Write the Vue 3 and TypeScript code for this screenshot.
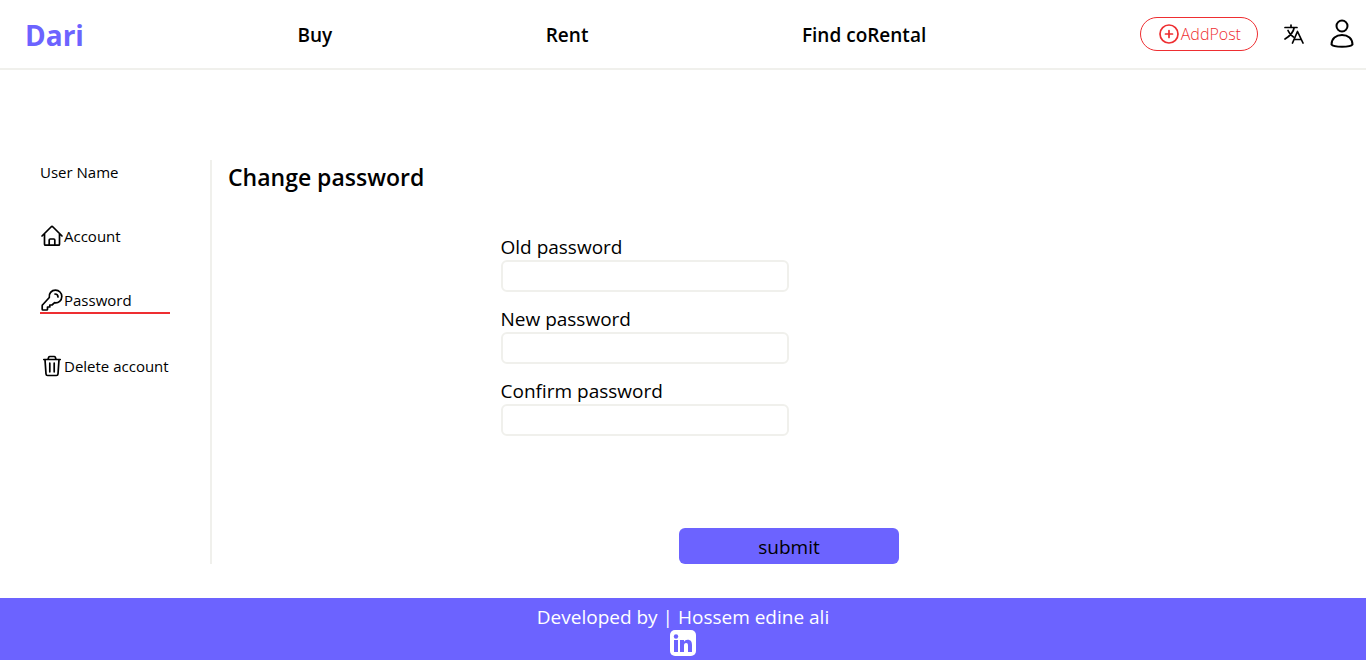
<script setup lang="ts">
import { ref } from 'vue'

interface Field {
  id: string
  label: string
}

const navLinks: string[] = ['Buy', 'Rent', 'Find coRental']

const fields: Field[] = [
  { id: 'old-password', label: 'Old password' },
  { id: 'new-password', label: 'New password' },
  { id: 'confirm-password', label: 'Confirm password' },
]

const values = ref<Record<string, string>>({})
</script>

<template>
  <div class="page">
    <header class="header">
      <a class="logo" href="#">Dari</a>
      <a v-for="link in navLinks" :key="link" class="nav-link" href="#">{{ link }}</a>
      <div class="actions">
        <button class="add-post" type="button">
          <svg class="icon" viewBox="0 0 24 24" fill="none" stroke="currentColor" stroke-width="1.7" stroke-linecap="round" aria-hidden="true">
            <circle cx="12" cy="12" r="9" />
            <path d="M12 8.500v7M8.500 12h7" />
          </svg>
          <span>AddPost</span>
        </button>
        <button class="icon-button" type="button" aria-label="Change language">
          <svg class="icon" viewBox="0 0 24 24" fill="none" stroke="currentColor" stroke-width="1.7" stroke-linecap="round" stroke-linejoin="round" aria-hidden="true">
            <path d="M3 5.500h12M9 3v2.500M12.200 5.500C11.500 10 8 14 3 17M6 8.500c1 2.500 3 5 5.500 6.500" />
            <path d="M10.500 21l5-11.500 5.500 11.500M12.300 17.500h7" />
          </svg>
        </button>
        <button class="icon-button" type="button" aria-label="Profile">
          <svg class="user-icon" viewBox="2 0 26 32" fill="none" stroke="currentColor" stroke-width="2" aria-hidden="true">
            <circle cx="14" cy="8" r="5.500" />
            <path d="M3.500 26.500C3.500 20.500 8 17 14 17s10.500 3.500 10.500 9.500C22.500 29.500 5.500 29.500 3.500 26.500z" stroke-linejoin="round" />
          </svg>
        </button>
      </div>
    </header>

    <div class="content">
      <nav class="sidebar" aria-label="Profile settings">
        <span class="side-item">User Name</span>
        <a class="side-item" href="#">
          <svg class="icon" viewBox="0 0 24 24" fill="none" stroke="currentColor" stroke-width="1.7" stroke-linecap="round" stroke-linejoin="round" aria-hidden="true">
            <path d="M2 12L11 3q1-1 2 0l9 9M4.500 10v10.200q0 1 1 1h13q1 0 1-1V10M9.200 21v-5q0-1 1-1h3.600q1 0 1 1v5" />
          </svg>
          <span>Account</span>
        </a>
        <a class="side-item active" href="#" aria-current="page">
          <svg class="icon" viewBox="0 0 24 24" fill="none" stroke="currentColor" stroke-width="1.7" stroke-linecap="round" stroke-linejoin="round" aria-hidden="true">
            <path d="M9.300 9.500C8.500 5.500 11.500 2.200 15.500 2.200c3.600 0 6.300 2.700 6.300 6.200 0 4-3.300 7-7.200 6.300L12 17H9.800v2H7.500v2.200q0 .8-.8.8H3q-.8 0-.8-.8v-3.500q0-.6.500-1z" />
            <path d="M15 6c1.800 0 3 1.200 3 3" />
          </svg>
          <span>Password</span>
        </a>
        <a class="side-item" href="#">
          <svg class="icon" viewBox="0 0 24 24" fill="none" stroke="currentColor" stroke-width="1.7" stroke-linecap="round" stroke-linejoin="round" aria-hidden="true">
            <path d="M3.800 5.500h16.400M8 5.300l.7-2q.3-.8 1.200-.8h4.200q.9 0 1.200.8l.7 2M5 5.700l1 14.300q.1 1.500 1.600 1.500h8.800q1.500 0 1.600-1.500l1-14.300M9.800 9.200v8.600M14.200 9.200v8.600" />
          </svg>
          <span>Delete account</span>
        </a>
      </nav>

      <main class="main">
        <h1 class="title">Change password</h1>
        <form class="form" @submit.prevent>
          <div class="fields">
            <div v-for="field in fields" :key="field.id" class="field">
              <label :for="field.id">{{ field.label }}</label>
              <input :id="field.id" v-model="values[field.id]" type="password" />
            </div>
          </div>
          <button class="submit" type="submit">submit</button>
        </form>
      </main>
    </div>

    <footer class="footer">
      <span>Developed by | Hossem edine ali</span>
      <a class="linkedin" href="#" aria-label="LinkedIn">
        <svg class="linkedin-icon" viewBox="0 0 26 26" aria-hidden="true">
          <rect width="26" height="26" rx="5" fill="#ffffff" />
          <g fill="#6c63ff">
            <circle cx="6" cy="6.500" r="2.200" />
            <path d="M4 10h4v12H4zM10 10h4v1.700c.7-1.200 1.900-2 3.500-2 3.500 0 4.500 2.200 4.500 5.500V22h-4v-6c0-1.700-.3-3-1.900-3-1.700 0-2.100 1.300-2.100 3v6h-4z" />
          </g>
        </svg>
      </a>
    </footer>
  </div>
</template>

<style>
body {
  margin: 0;
}
</style>

<style scoped>
.page {
  box-sizing: border-box;
  min-height: 100vh;
  display: flex;
  flex-direction: column;
  background: #ffffff;
  color: #000000;
  font-family: "Segoe UI", "Open Sans", "Noto Sans", sans-serif;
  font-size: 15px;
  line-height: 24px;
}

a {
  color: inherit;
  text-decoration: none;
}

button {
  font-family: inherit;
  color: inherit;
  cursor: pointer;
}

.header {
  display: flex;
  align-items: center;
  justify-content: space-between;
  height: 68px;
  padding: 0 10px 0 25px;
  border-bottom: 2px solid #f0f0ec;
}

.logo {
  padding-top: 2px;
  color: #6c63ff;
  font-size: 28px;
  font-weight: 700;
}

.nav-link {
  padding-top: 2px;
  font-size: 19px;
  font-weight: 600;
}

.actions {
  display: flex;
  align-items: center;
  gap: 24px;
}

.add-post {
  box-sizing: border-box;
  display: flex;
  align-items: center;
  height: 34px;
  padding: 0 16px;
  border: 1px solid #ee2e31;
  border-radius: 17px;
  background: none;
  color: #ee2e31;
  font-size: 16px;
  font-weight: 300;
}

.icon-button {
  display: flex;
  padding: 0;
  border: 0;
  background: none;
}

.icon {
  flex: none;
  width: 24px;
  height: 24px;
}

.user-icon {
  width: 26px;
  height: 32px;
}

.content {
  display: flex;
  flex: 1;
  padding: 90px 0 34px;
}

.sidebar {
  box-sizing: border-box;
  display: flex;
  flex: none;
  flex-direction: column;
  gap: 40px;
  width: 212px;
  padding: 0 40px;
  border-right: 2px solid #f0f0ec;
}

.side-item {
  display: flex;
  align-items: center;
  white-space: nowrap;
}

.active {
  border-bottom: 2px solid #ee2e31;
}

.main {
  display: flex;
  flex: 1;
  flex-direction: column;
}

.title {
  margin: 0 0 40px;
  padding-left: 16px;
  font-size: 23px;
  font-weight: 600;
  line-height: 34px;
}

.form {
  display: flex;
  flex: 1;
  flex-direction: column;
  justify-content: space-between;
}

.fields {
  display: flex;
  flex-direction: column;
  gap: 14px;
  width: 25%;
  margin-left: 25%;
}

.field {
  display: flex;
  flex-direction: column;
}

.field label {
  font-size: 19px;
  line-height: 26px;
}

.field input {
  box-sizing: border-box;
  width: 100%;
  height: 32px;
  padding: 0 8px;
  border: 2px solid #f0f0ec;
  border-radius: 6px;
  background: #ffffff;
  font: inherit;
}

.submit {
  align-self: center;
  width: 220px;
  height: 36px;
  padding: 2px 0 0;
  border: 0;
  border-radius: 6px;
  background: #6c63ff;
  font-size: 19px;
}

.footer {
  box-sizing: border-box;
  display: flex;
  flex-direction: column;
  align-items: center;
  padding: 6px 0 4px;
  background: #6c63ff;
  color: #ffffff;
  font-size: 19px;
  line-height: 26px;
}

.linkedin {
  display: flex;
}

.linkedin-icon {
  width: 26px;
  height: 26px;
}
</style>
